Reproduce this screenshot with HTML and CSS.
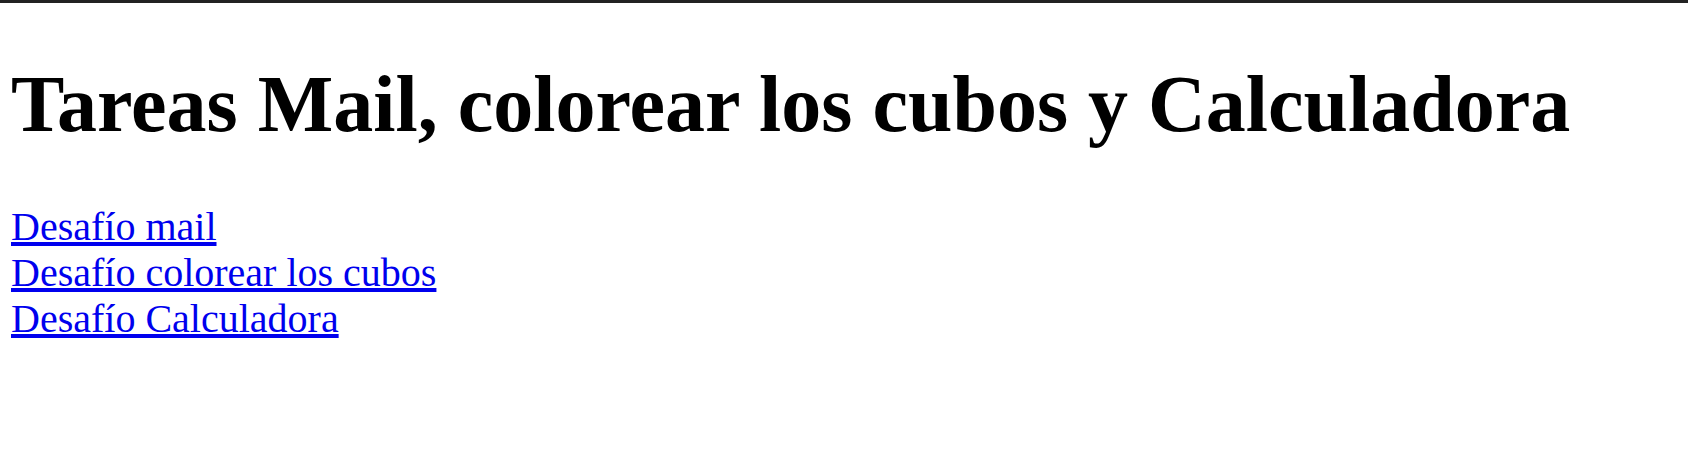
FILE: index.html
```html
<!DOCTYPE html>
<html lang="es">
<head>
<meta charset="utf-8">
<title>Tareas</title>
<link rel="stylesheet" href="styles.css">
</head>
<body>
<div class="topbar"></div>
<main class="page">
  <h1 class="title">Tareas Mail, colorear los cubos y Calculadora</h1>
  <nav class="links">
    <a href="#">Desafío mail</a>
    <a href="#">Desafío colorear los cubos</a>
    <a href="#">Desafío Calculadora</a>
  </nav>
</main>
</body>
</html>
```

FILE: styles.css
```css
html, body {
  margin: 0;
  padding: 0;
  background: #fff;
}
body {
  font-family: "Liberation Serif", "Times New Roman", serif;
  color: #000;
}
.topbar {
  height: 3px;
  background: #222;
}
.page {
  padding: 0 11px;
}
.title {
  font-size: 80px;
  font-weight: bold;
  margin: 56px 0 54px;
  line-height: normal;
}
.links {
  display: flex;
  flex-direction: column;
  align-items: flex-start;
  font-size: 40px;
  line-height: 46px;
}
.links a {
  color: #0000ee;
  text-decoration: underline;
}
```
